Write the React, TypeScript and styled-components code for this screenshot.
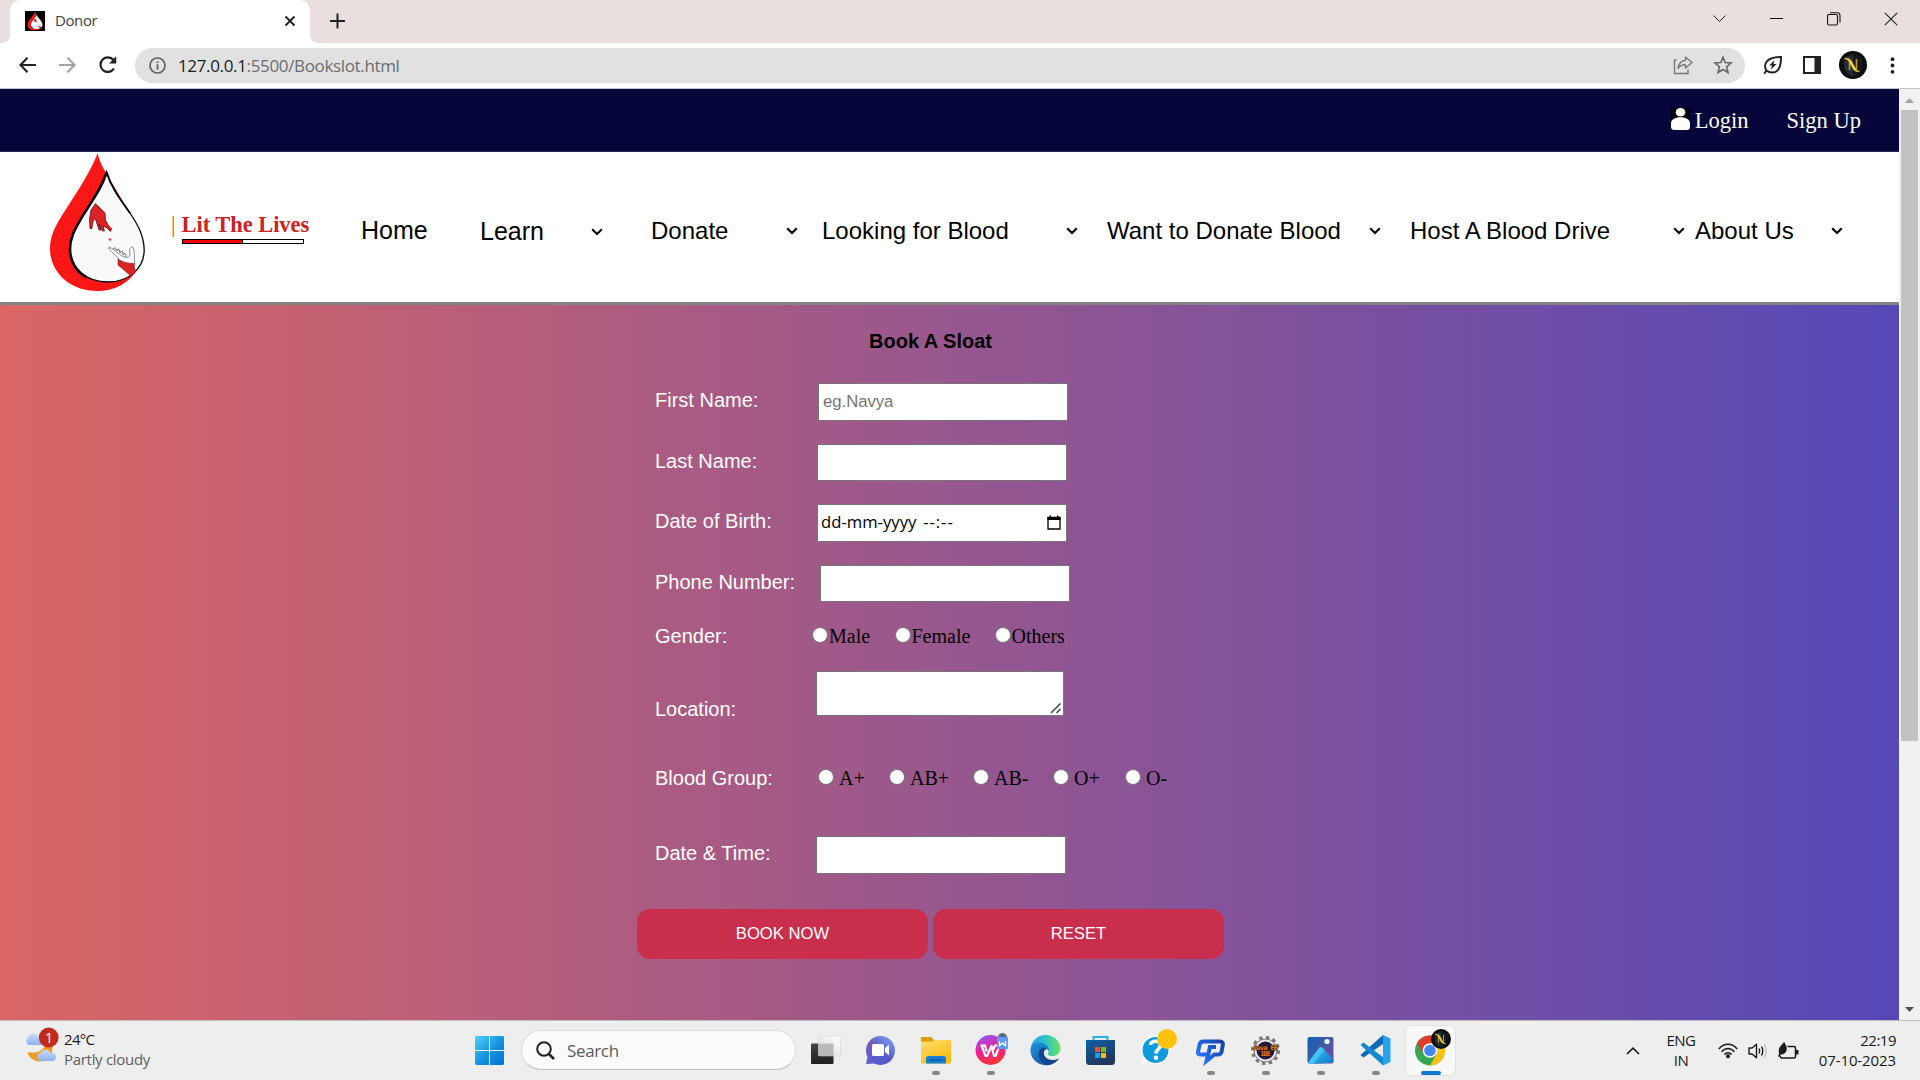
import React from "react";
import styled, { createGlobalStyle } from "styled-components";

const UI = `"Open Sans", "Noto Sans", sans-serif`;
const ARIAL = `"Liberation Sans", Arial, sans-serif`;
const TIMES = `"Liberation Serif", "Times New Roman", serif`;

const Global = createGlobalStyle`
  * { box-sizing: border-box; }
  body { margin: 0; overflow: hidden; background: #fff; }
  svg { display: block; flex: none; }
`;

const Screen = styled.div`
  width: 1920px;
  height: 1080px;
  display: flex;
  flex-direction: column;
  overflow: hidden;
`;

/* ---------- browser frame ---------- */

const TabStrip = styled.div`
  height: 43px;
  flex: none;
  display: flex;
  background: #e8dfde;
  padding-left: 2px;
`;

const TabFoot = styled.div<{ $side: "left" | "right" }>`
  width: 8px;
  height: 43px;
  background: radial-gradient(
    circle at ${(p) => (p.$side === "left" ? "0 35px" : "8px 35px")},
    transparent 7.6px,
    #fff 8.2px
  );
  clip-path: inset(35px 0 0 0);
`;

const Tab = styled.div`
  width: 300px;
  height: 43px;
  border-radius: 10px 10px 0 0;
  background: #fff;
  display: flex;
  align-items: center;
  padding: 0 14px 1px 15px;
`;

const TabTitle = styled.span`
  flex: 1;
  margin: 0 0 2px 10px;
  font: 15px/20px ${UI};
  letter-spacing: -0.4px;
  color: #3c4043;
`;

const NewTab = styled.div`
  padding: 13px 0 0 12px;
`;

const WindowButtons = styled.div`
  margin-left: auto;
  height: 38px;
  display: flex;
  align-items: center;
`;

const WindowButton = styled.div`
  width: 57.3px;
  display: flex;
  justify-content: center;
`;

const Toolbar = styled.div`
  height: 46px;
  flex: none;
  display: flex;
  align-items: center;
  background: #fff;
  border-bottom: 1px solid #c4c4c4;
  padding: 0 16px 1px 17px;
`;

const NavButtons = styled.div`
  display: flex;
  gap: 19px;
  width: 118px;
`;

const AddressBar = styled.div`
  width: 1610px;
  height: 35px;
  border-radius: 18px;
  background: #e1e1e1;
  display: flex;
  align-items: center;
  padding: 0 12px 0 14px;
`;

const Url = styled.div`
  flex: 1;
  margin: 2px 0 0 12px;
  font: 17px/24px ${UI};
  letter-spacing: -0.35px;
  color: #6a6d70;
  b {
    font-weight: 400;
    color: #202124;
  }
`;

const BarIcons = styled.div`
  display: flex;
  gap: 20px;
`;

const Extensions = styled.div`
  flex: 1;
  display: flex;
  align-items: center;
  margin-left: 18px;
`;

const Spacer = styled.div<{ $w: number }>`
  width: ${(p) => p.$w}px;
  flex: none;
`;

/* ---------- site ---------- */

const Viewport = styled.div`
  height: 931px;
  flex: none;
  display: flex;
`;

const Page = styled.div`
  width: 1899px;
  display: flex;
  flex-direction: column;
`;

const AccountBar = styled.div`
  height: 63px;
  flex: none;
  background: #06063b;
  border-bottom: 1px solid #2a2a55;
  display: flex;
  justify-content: flex-end;
  padding: 19px 38px 0 0;
`;

const AccountLink = styled.a`
  font: 22.5px/26px ${TIMES};
  color: #fff;
  margin-left: 5px;
`;

const SiteHeader = styled.header`
  height: 153px;
  flex: none;
  background: #fff;
  border-bottom: 3px solid #828282;
  display: flex;
`;

const LogoBox = styled.div`
  width: 171px;
  padding-left: 48px;
`;

const Brand = styled.div`
  width: 190px;
  padding-top: 60px;
`;

const BrandName = styled.div`
  font: bold 22.5px/26px ${TIMES};
  letter-spacing: -0.05px;
  color: #cb2222;
  white-space: pre;
  span {
    font-weight: 400;
    color: #d9572f;
    margin-right: 6px;
  }
`;

const BrandBar = styled.div`
  display: grid;
  grid-template-columns: 1fr 1fr;
  width: 122px;
  height: 5px;
  margin: 1px 0 0 11px;
  border: 1px solid #000;
  background: #fff;
  &::before {
    content: "";
    background: #f00;
    border-right: 1px solid #000;
  }
`;

const Menu = styled.nav`
  display: grid;
  grid-template-columns: 119px 171px 171px 285px 303px 285px 170px;
  padding-top: 64px;
`;

const MenuItem = styled.div<{ $w: number; $drop?: number; $size?: number }>`
  width: ${(p) => p.$w}px;
  height: 29px;
  margin-top: ${(p) => p.$drop ?? 0}px;
  display: flex;
  justify-content: space-between;
  align-items: center;
  font: ${(p) => p.$size ?? 24}px/29px ${ARIAL};
  color: #000;
  white-space: nowrap;
`;

const FormArea = styled.main`
  flex: 1;
  background: linear-gradient(to right, #da6665, #5548b7);
  padding: 24px 0 0 637px;
`;

const FormTitle = styled.h1`
  margin: 0 0 30px 232px;
  font: bold 20px/24px ${ARIAL};
  color: #000;
`;

const Row = styled.div<{ $gap?: number; $h: number }>`
  margin: ${(p) => p.$gap ?? 0}px 0 0 18px;
  height: ${(p) => p.$h}px;
  display: flex;
  align-items: flex-start;
`;

const Label = styled.label<{ $w: number; $drop?: number }>`
  width: ${(p) => p.$w}px;
  flex: none;
  margin-top: ${(p) => p.$drop ?? 0}px;
  font: 20px/24px ${ARIAL};
  color: #fff;
`;

const Field = styled.input<{ $h?: number }>`
  width: 250px;
  height: ${(p) => p.$h ?? 38}px;
  margin: 0;
  padding: 0 4px;
  border: 1px solid #767676;
  border-radius: 0;
  outline: none;
  background: #fff;
  font: 16.67px/20px ${ARIAL};
  &::placeholder {
    color: #757575;
  }
`;

const DateField = styled.div`
  width: 250px;
  height: 38px;
  padding: 0 5px 2px 3px;
  border: 1px solid #767676;
  background: #fff;
  display: flex;
  align-items: center;
  justify-content: space-between;
  font: 16.67px/20px ${UI};
  color: #000;
  span {
    margin-left: 7px;
    letter-spacing: 0.9px;
  }
`;

const AreaField = styled.div`
  width: 248px;
  height: 45px;
  border: 1px solid #767676;
  background: #fff;
  display: flex;
  align-items: flex-end;
  justify-content: flex-end;
  padding: 1px;
`;

const Choice = styled.label<{ $w: number; $space: number }>`
  width: ${(p) => p.$w}px;
  flex: none;
  display: flex;
  gap: ${(p) => p.$space}px;
  font: 20px/24px ${TIMES};
  color: #000;
  white-space: nowrap;
`;

const Dot = styled.span`
  width: 16px;
  height: 16px;
  margin-top: 3px;
  flex: none;
  border-radius: 50%;
  border: 1px solid #767676;
  background: #fff;
`;

const Actions = styled.div`
  display: flex;
  gap: 5px;
  margin-top: 35px;
`;

const Action = styled.button`
  width: 291px;
  height: 50px;
  border: 0;
  border-radius: 13px;
  background: #ca2e4d;
  color: #fff;
  font: 16.67px/20px ${ARIAL};
  padding: 0;
`;

const Scrollbar = styled.div`
  width: 21px;
  background: #f1f1f1;
  display: flex;
  flex-direction: column;
  align-items: center;
  padding: 9px 0 8px;
`;

const Thumb = styled.div`
  width: 17px;
  height: 631px;
  margin: 7px 0 auto;
  background: #c1c1c1;
`;

/* ---------- taskbar ---------- */

const Taskbar = styled.div`
  height: 60px;
  flex: none;
  display: flex;
  background: #eeeeee;
  border-top: 1px solid #bdbdbd;
`;

const Weather = styled.div`
  width: 461px;
  display: flex;
  padding: 6px 0 0 24px;
`;

const SmallText = styled.div<{ $muted?: boolean; $track?: number }>`
  font: 15px/20px ${UI};
  letter-spacing: ${(p) => p.$track ?? -0.3}px;
  color: ${(p) => (p.$muted ? "#5f5f5f" : "#1a1a1a")};
  white-space: nowrap;
`;

const WeatherText = styled.div`
  margin: 2px 0 0 4px;
`;

const StartCell = styled.div`
  width: 60px;
  padding: 15px 0 0 14px;
`;

const SearchBox = styled.div`
  width: 275px;
  height: 40px;
  margin: 9px 2px 0 0;
  border: 1px solid #dcdcdc;
  border-bottom-color: #c0c0c0;
  border-radius: 20px;
  background: #fbfbfb;
  display: flex;
  align-items: center;
  padding-left: 14px;
  gap: 12px;
  font: 17px/24px ${UI};
  letter-spacing: -0.35px;
  color: #5c5c5c;
  span {
    margin-top: 1px;
  }
`;

const AppCell = styled.div<{ $active?: boolean }>`
  width: 49px;
  height: 49px;
  margin: 5px 3px 0;
  flex: none;
  display: flex;
  flex-direction: column;
  align-items: center;
  justify-content: space-between;
  border-radius: 5px;
  background: ${(p) => (p.$active ? "#f8f8f8" : "transparent")};
  box-shadow: ${(p) => (p.$active ? "0 0 0 1px #e2e2e2" : "none")};
  padding-top: 2px;
`;

const Mark = styled.div<{ $kind: "none" | "open" | "active" }>`
  width: ${(p) => (p.$kind === "active" ? 20 : 8)}px;
  height: 4px;
  border-radius: 2px;
  background: ${(p) =>
    p.$kind === "active" ? "#0a78d4" : p.$kind === "open" ? "#868686" : "transparent"};
`;

const Tray = styled.div`
  margin-left: auto;
  display: flex;
  align-items: center;
  padding-right: 24px;
`;

const TrayText = styled.div<{ $align: string; $w: number }>`
  width: ${(p) => p.$w}px;
  text-align: ${(p) => p.$align};
  margin-bottom: 2px;
`;

/* ---------- drawings ---------- */

const Drop = ({ w, h, dark }: { w: number; h: number; dark?: boolean }) => (
  <svg width={w} height={h} viewBox={dark ? "-14 -4 126 148" : "0 0 97 140"} preserveAspectRatio="none">
    {dark && <rect x="-14" y="-4" width="126" height="148" fill="#000" />}
    <path d="M49.500 1C51 8 54 14 58 21L90 75C96 87 98 102 91 115C81 132 66 139 49 139C22 139 2 120 2 97C2 84 7 75 13 65L34 32C41 20 47 9 49.500 1Z" fill="#fc1717" />
    <path d="M58.500 20C63 35 72 47 82 61C90 73 96 84 96.200 98C96 117 80 130 60 130C39 130 22 117 22 97C22 85 27 77 34 65C44 49 55 34 58.500 20Z" fill="#fafafa" stroke="#050505" strokeWidth="1.300" />
    <path d="M58.500 20C55 34 44 49 34 65C27 77 22 85 22 97C22 110 29 120 38 125" fill="none" stroke="#050505" strokeWidth="2.600" />
    <path d="M58.500 20C63 35 72 47 82 61" fill="none" stroke="#050505" strokeWidth="1.800" />
    <path d="M43 58L47.500 51.500L57 61L57.500 68L60 73L63.500 77L62.500 79.500L59 76L55 74L56.500 79L54.500 79L51 72L53 78L51 78L47.500 67C44.500 68 45 71 44 76.500L42 76.500L41.500 67Z" fill="#dd2225" stroke="#3b0b0b" strokeWidth=".7" />
    <path d="M57 70L63 77.500" stroke="#dd2225" strokeWidth="2" />
    <circle cx="62" cy="87.500" r="1.300" fill="#e33" />
    <path d="M61 95C66 97 69 101 74 104C78 106 82 106 82 102C81 97 82 95 84.500 95C87 98 86 107 87 112L86 118L72 112L70 106L61 97Z" fill="#fff" stroke="#444" strokeWidth=".6" />
    <path d="M65 98Q67 93 69 99Q71 94 72 101Q75 96 75 103Q78 99 78 105" fill="none" stroke="#333" strokeWidth=".7" />
    <path d="M70 107C76 111 80 111 86 111.500L86 116L88 119L83 124L70 113Z" fill="#dd2225" stroke="#5b1010" strokeWidth=".5" />
  </svg>
);

const Chevron = () => (
  <svg width="12" height="8" viewBox="0 0 12 8">
    <path d="M1.200 1.200L6 6L10.800 1.200" fill="none" stroke="#000" strokeWidth="2.100" />
  </svg>
);

const Avatar = ({ size }: { size: number }) => (
  <svg width={size} height={size} viewBox="0 0 28 28">
    <circle cx="14" cy="14" r="14" fill="#0b0d10" />
    <path d="M14 3L23 6.500V14C23 20 19 23.500 14 26C9 23.500 5 20 5 14V6.500Z" fill="#252c33" />
    <path d="M14 3L23 6.500V14C23 20 19 23.500 14 26Z" fill="#14191f" />
    <path d="M10.500 11V19M17.500 8V18.500" stroke="#b8992f" strokeWidth="1.600" />
    <path d="M5.500 7.500C9.500 7 11.500 8 13 11L17 18.500Q18 20 20.500 20.200C17.500 21 15.500 20.200 14 17.500L10 10.500C9 8.800 7.500 8 5.500 7.500Z" fill="#f3d13c" stroke="#f3d13c" strokeWidth=".6" />
  </svg>
);

const StoreSquares = () => (
  <>
    <path d="M9 15h5v5H9z" fill="#f25022" />
    <path d="M15 15h5v5h-5z" fill="#7fba00" />
    <path d="M9 21h5v5H9z" fill="#00a4ef" />
    <path d="M15 21h5v5h-5z" fill="#ffb900" />
  </>
);

/* Every taskbar drawing shares one canvas whose origin is the icon's middle. */
const AppIcon = ({ children }: { children: React.ReactNode }) => (
  <svg width="49" height="40" viewBox="-24.500 -22.500 49 40">
    {children}
  </svg>
);

const apps: { name: string; mark: "none" | "open" | "active"; art: React.ReactNode }[] = [
  {
    name: "Task view",
    mark: "none",
    art: (
      <>
        <defs>
          <linearGradient id="tvd" x2="0" y2="1"><stop stopColor="#454545" /><stop offset="1" stopColor="#1e1e1e" /></linearGradient>
          <linearGradient id="tvl" x1="1" x2="0" y2="1"><stop stopColor="#fff" /><stop offset="1" stopColor="#d9d9d9" /></linearGradient>
        </defs>
        <rect x="-14.500" y="-7" width="22.500" height="20.500" rx="1" fill="url(#tvd)" />
        <rect x="-7" y="-14.500" width="22" height="20" rx="1" fill="url(#tvl)" stroke="#d0d0d0" strokeWidth=".5" />
        <rect x="-7" y="-7" width="15" height="12.500" fill="#b9b9b9" />
      </>
    ),
  },
  {
    name: "Chat",
    mark: "none",
    art: (
      <>
        <defs><linearGradient id="chat" x1="0" x2="1" y2=".8"><stop stopColor="#8e5aa2" /><stop offset=".45" stopColor="#5b5fd0" /><stop offset="1" stopColor="#5252c2" /></linearGradient>
        <linearGradient id="chat2" x1="0" x2="1" y1="1" y2="0"><stop offset=".5" stopColor="#79b6ff" stopOpacity="0" /><stop offset="1" stopColor="#7fa8f8" /></linearGradient></defs>
        <path d="M0-14.500A14.500 14.500 0 1 1-6.500 13L-14.500 13.500L-13 6.500A14.500 14.500 0 0 1 0-14.500Z" fill="url(#chat)" />
        <circle r="14.500" fill="url(#chat2)" />
        <rect x="-8.500" y="-6.500" width="12" height="12" rx="1.500" fill="#fff" />
        <path d="M4.500-2.500L8.500-6V5L4.500 1.500Z" fill="#fff" />
      </>
    ),
  },
  {
    name: "File Explorer",
    mark: "open",
    art: (
      <>
        <defs><linearGradient id="fld" x2=".6" y2="1"><stop stopColor="#ffdd6e" /><stop offset="1" stopColor="#f9bb16" /></linearGradient></defs>
        <path d="M-14.500-13.500H-4.500L-1.500-10.500V-5H-14.500Z" fill="#dd9c05" />
        <path d="M-14.500-9H-4L-1-10.500H15.500V13H-14.500Z" fill="url(#fld)" />
        <path d="M-9.500 13V8Q-9.500 5.500-7 5.500H8Q10.500 5.500 10.500 8V13Z" fill="#1480d8" />
        <path d="M-6 9.500H7" stroke="#0b4f97" strokeWidth="1.200" />
      </>
    ),
  },
  {
    name: "WPS Office",
    mark: "open",
    art: (
      <>
        <defs><linearGradient id="wps" x1=".3" x2=".6" y2="1"><stop stopColor="#9456f5" /><stop offset=".5" stopColor="#f51c8f" /><stop offset="1" stopColor="#ff3b30" /></linearGradient></defs>
        <circle cy="-.5" r="15" fill="url(#wps)" />
        <path d="M-5.500-5H-9L-5 5.500H-3.500L1-4.500L3.500 5.500H5L9-5H4.500L3-1.500M-5.500-5L-4 0" fill="none" stroke="#fff" strokeWidth="2.200" strokeLinejoin="round" strokeLinecap="round" />
        <circle cx="12" cy="-13" r="4.500" fill="#596a83" />
        <rect x="6.500" y="-13.500" width="11" height="12" rx="1" fill="#5f97f1" />
        <path d="M9-9.500V-5L12-7.500L15-5V-9.500" fill="none" stroke="#fff" strokeWidth="1.300" />
      </>
    ),
  },
  {
    name: "Edge",
    mark: "none",
    art: (
      <>
        <defs>
          <linearGradient id="eg1" x2="1"><stop stopColor="#2a9ce0" /><stop offset=".5" stopColor="#2fc3c9" /><stop offset="1" stopColor="#6ee35c" /></linearGradient>
          <linearGradient id="eg2" x2=".6" y2="1"><stop stopColor="#1d93dc" /><stop offset="1" stopColor="#1259a8" /></linearGradient>
        </defs>
        <path d="M-15-1C-14-10-8-15.500 0-15.500C9-15.500 15-9 15-2C15 3 11 5.500 7 5.500C3 5.500 1 4 3 2C4-3-1-8-7-7C-11-6-14-4-15-1Z" fill="url(#eg1)" />
        <path d="M-15-1C-14-8-6-9-2-7C2-5 4-2.500 3.500 1C3-1.500 0-2.500-1.500 1C-3 8 5 13 13 8C8 14 3 15 0 14.800C-9 14.500-15.500 7-15-1Z" fill="url(#eg2)" />
        <path d="M-4-3C-10 3-6 13 2 14.600C7 14.500 11 11.500 13.500 8.300C6 11.500-3 8-1.500 1Q-1-1 .5-1.500Q-1.500-3.500-4-3Z" fill="#15468d" />
      </>
    ),
  },
  {
    name: "Store",
    mark: "none",
    art: (
      <>
        <defs><linearGradient id="str" x2=".5" y2="1"><stop stopColor="#0a62a9" /><stop offset="1" stopColor="#22355c" /></linearGradient></defs>
        <path d="M-7-10V-13.500H7V-10" fill="none" stroke="#27b1ee" strokeWidth="2" />
        <path d="M-14.500-10.500H14.500V11Q14.500 14.500 11 14.500H-11Q-14.500 14.500-14.500 11Z" fill="url(#str)" />
        <g transform="translate(-14.500 -18.500)"><StoreSquares /></g>
      </>
    ),
  },
  {
    name: "Help",
    mark: "none",
    art: (
      <>
        <path d="M-14.500 13L-12.500 7A14.300 14.300 0 1 1-8 11.500Z" fill="#fff" />
        <circle cx="0" cy="-.5" r="14.500" fill="#fff" />
        <circle cx="0" cy="-.5" r="13" fill="#0c9bdb" />
        <path d="M-5-5.500C-5-10.500 5-10.500 5-5.500C5-1.500 .5-1.500 .5 3" fill="none" stroke="#fff" strokeWidth="3.600" />
        <circle cx=".5" cy="7.300" r="2.300" fill="#fff" />
        <circle cx="11.500" cy="-11.500" r="10" fill="#fec10d" />
      </>
    ),
  },
  {
    name: "Q client",
    mark: "open",
    art: (
      <>
        <defs><linearGradient id="qc" x1="1" x2="0" y2=".6"><stop stopColor="#1644a8" /><stop offset="1" stopColor="#2671f2" /></linearGradient></defs>
        <path d="M-3 4H-9.500Q-13 4-12.500 1.500L-11-5.500Q-10.500-9-7-9H9.500Q13-9 12.300-5.500L11 1.500Q10.500 4 7.500 4H4L-4 10.500L-.5-3.500H5.500" fill="none" stroke="url(#qc)" strokeWidth="4" />
      </>
    ),
  },
  {
    name: "Java EE IDE",
    mark: "open",
    art: (
      <>
        <circle r="12.800" fill="none" stroke="#777" strokeWidth="3.500" strokeDasharray="3.350 3.350" />
        <circle r="11.500" fill="#e6e6e6" stroke="#777" strokeWidth="1" />
        <circle r="9" fill="#241b3c" />
        <text textAnchor="middle" y="-1" fontFamily="DejaVu Sans Mono, monospace" fontWeight="700" fontSize="6.500" textLength="25" fill="#f58220" stroke="#3a1a08" strokeWidth=".8" paintOrder="stroke">Java EE</text>
        <text textAnchor="middle" y="5.500" fontFamily="DejaVu Sans Mono, monospace" fontWeight="700" fontSize="6.500" textLength="10" fill="#f58220" stroke="#3a1a08" strokeWidth=".8" paintOrder="stroke">IDE</text>
      </>
    ),
  },
  {
    name: "Photos",
    mark: "open",
    art: (
      <>
        <defs>
          <linearGradient id="ph" x2="1" y2=".6"><stop stopColor="#0c63b3" /><stop offset="1" stopColor="#6a4fa0" /></linearGradient>
          <linearGradient id="ph2" x2="1" y2="1"><stop stopColor="#41c6f4" /><stop offset="1" stopColor="#1279cf" /></linearGradient>
        </defs>
        <rect x="-13" y="-13.500" width="26" height="26.500" rx="2" fill="url(#ph)" />
        <path d="M-12 11.500L-1.500-2.500Q0-4.500 2-2.500L13 9V11Q13 13-11 13Z" fill="url(#ph2)" />
        <path d="M-12 11.500L-1.500-2.500Q0-4.500 2-2.500L4-.5L-7 13H-11Z" fill="#40c4f3" />
        <circle cx="6.500" cy="-9" r="2.600" fill="#eef6ff" />
      </>
    ),
  },
  {
    name: "VS Code",
    mark: "open",
    art: (
      <>
        <path d="M-12 7L-15 4.500L7.500-15.500V-6.500Z" fill="#0f6cb3" />
        <path d="M-12-8L-15-5.500L7.500 15V6.500Z" fill="#1687d3" />
        <path d="M7.500-15.500L15-12V11.500L7.500 15Z" fill="#27a3ee" />
      </>
    ),
  },
  {
    name: "Chrome",
    mark: "active",
    art: (
      <>
        <circle cx="-.5" r="15" fill="#34a853" />
        <path d="M-.5 0L-13.500-7.500A15 15 0 0 1 12.500-7.500Z" fill="#e33b2e" />
        <path d="M-.5-7.500H12.500A15 15 0 0 1-.5 15L6 3.700Z" fill="#fbc116" />
        <path d="M-13.500-7.500L-7 3.800L-.5-7.500Z" fill="#e33b2e" />
        <circle cx="-.5" r="7.300" fill="#fff" />
        <circle cx="-.5" r="5.800" fill="#4285f4" />
        <g transform="translate(.5 -21.500)"><Avatar size={20} /></g>
      </>
    ),
  },
];

const Option = ({ w, space, text }: { w: number; space: number; text: string }) => (
  <Choice $w={w} $space={space}>
    <Dot />
    {text}
  </Choice>
);

const menu = [
  { text: "Learn", w: 123, drop: 1, size: 25 },
  { text: "Donate", w: 147 },
  { text: "Looking for Blood", w: 256 },
  { text: "Want to Donate Blood", w: 274 },
  { text: "Host A Blood Drive", w: 275 },
  { text: "About Us", w: 148 },
];

export default function App() {
  return (
    <Screen>
      <Global />
      <TabStrip>
        <TabFoot $side="left" />
        <Tab>
          <Drop w={20} h={20} dark />
          <TabTitle>Donor</TabTitle>
          <svg width="12" height="12" viewBox="0 0 12 12"><path d="M1.500 1.500L10.500 10.500M10.500 1.500L1.500 10.500" stroke="#202124" strokeWidth="1.900" /></svg>
        </Tab>
        <TabFoot $side="right" />
        <NewTab>
          <svg width="15" height="16" viewBox="0 0 15 16"><path d="M0 8H15M7.500 .5V15.500" stroke="#202124" strokeWidth="2" /></svg>
        </NewTab>
        <WindowButtons>
          <WindowButton><svg width="13" height="8" viewBox="0 0 13 8"><path d="M.5 .5L6.500 6.500L12.500 .5" fill="none" stroke="#222" strokeWidth="1" /></svg></WindowButton>
          <WindowButton><svg width="13" height="2" viewBox="0 0 13 2"><path d="M0 .5H13" stroke="#111" /></svg></WindowButton>
          <WindowButton><svg width="14" height="14" viewBox="0 0 14 14"><rect x=".5" y="2.500" width="10" height="10.500" rx="1.500" fill="none" stroke="#111" strokeWidth="1.100" /><path d="M3 .7H10Q13 .7 13 3.500V10.500" fill="none" stroke="#111" strokeWidth="1.100" /></svg></WindowButton>
          <WindowButton><svg width="14" height="14" viewBox="0 0 14 14"><path d="M.8 .8L13.200 13.200M13.200 .8L.8 13.200" stroke="#222" strokeWidth="1.100" /></svg></WindowButton>
        </WindowButtons>
      </TabStrip>
      <Toolbar>
        <NavButtons>
          <svg width="21" height="20" viewBox="0 0 21 20"><path d="M19 10H4M10.500 2.800L3.500 10L10.500 17.200" fill="none" stroke="#202124" strokeWidth="2.100" /></svg>
          <svg width="21" height="20" viewBox="0 0 21 20"><path d="M2 10H17M10.500 2.800L17.500 10L10.500 17.200" fill="none" stroke="#a3a3a3" strokeWidth="2.100" /></svg>
          <svg width="21" height="20" viewBox="0 0 21 20"><path d="M17 13.500A7.300 7.300 0 1 1 16.500 5" fill="none" stroke="#202124" strokeWidth="2.200" /><path d="M19.200 1.200V8.500H12Z" fill="#202124" /></svg>
        </NavButtons>
        <AddressBar>
          <svg width="17" height="17" viewBox="0 0 17 17"><circle cx="8.500" cy="8.500" r="7.500" fill="none" stroke="#5f6368" strokeWidth="1.700" /><path d="M8.500 7.300V12.800M8.500 4.200V6" stroke="#5f6368" strokeWidth="1.800" /></svg>
          <Url><b>127.0.0.1</b>:5500/Bookslot.html</Url>
          <BarIcons>
            <svg width="20" height="20" viewBox="0 0 20 20"><path d="M3.500 5H1.500V18.500H15V14.500" fill="none" stroke="#777" strokeWidth="1.400" /><path d="M12.500 2L19 7.500L12.500 13V9.800C9 9.800 6.500 11 5 13.500C5.500 9 8 5.800 12.500 5.200Z" fill="none" stroke="#777" strokeWidth="1.400" strokeLinejoin="round" /></svg>
            <svg width="20" height="20" viewBox="0 0 20 20"><path d="M10 2.200L12.200 7.500L18 8L13.600 11.800L15 17.500L10 14.500L5 17.500L6.400 11.800L2 8L7.800 7.500Z" fill="none" stroke="#666" strokeWidth="1.600" /></svg>
          </BarIcons>
        </AddressBar>
        <Extensions>
          <svg width="20" height="20" viewBox="0 0 20 20"><path d="M3.500 16C.5 11 1.500 1.800 18 2C18.300 12 15 17.500 9.500 17.500C7 17.500 5 16.800 3.500 15.500L1.200 18.800" fill="none" stroke="#202124" strokeWidth="1.900" /><path d="M11.500 5L6.200 10.500H9L7.800 14.800L13.500 9H10.500Z" fill="#202124" /></svg>
          <Spacer $w={20} />
          <svg width="18" height="18" viewBox="0 0 18 18"><path d="M1 1H17V17H1Z" fill="#fff" stroke="#202124" strokeWidth="2" /><path d="M11.500 0H18V18H11.500Z" fill="#202124" /></svg>
          <Spacer $w={18} />
          <Avatar size={28} />
          <Spacer $w={23} />
          <svg width="5" height="17" viewBox="0 0 5 17"><circle cx="2.500" cy="2.200" r="1.900" fill="#202124" /><circle cx="2.500" cy="8.500" r="1.900" fill="#202124" /><circle cx="2.500" cy="14.800" r="1.900" fill="#202124" /></svg>
        </Extensions>
      </Toolbar>

      <Viewport>
        <Page>
          <AccountBar>
            <svg width="19" height="22" viewBox="0 0 19 22"><rect width="19" height="22" fill="#000" /><ellipse cx="9.500" cy="4.300" rx="4.800" ry="4.300" fill="#fff" /><path d="M0 19V15C0 11 5 9.200 9.500 9.200S19 11 19 15V19Q19 22 15.500 22H3.500Q0 22 0 19Z" fill="#fff" /></svg>
            <AccountLink>Login</AccountLink>
            <Spacer $w={33} />
            <AccountLink>Sign Up</AccountLink>
          </AccountBar>
          <SiteHeader>
            <LogoBox><Drop w={97} h={140} /></LogoBox>
            <Brand>
              <BrandName><span>|</span>Lit The Lives</BrandName>
              <BrandBar />
            </Brand>
            <Menu>
              <MenuItem $w={70} $size={25}>Home</MenuItem>
              {menu.map((m) => (
                <MenuItem key={m.text} $w={m.w} $drop={m.drop} $size={m.size}>
                  {m.text}
                  <Chevron />
                </MenuItem>
              ))}
            </Menu>
          </SiteHeader>
          <FormArea>
            <FormTitle>Book A Sloat</FormTitle>
            <Row $h={38}>
              <Label $w={163} $drop={5}>First Name:</Label>
              <Field placeholder="eg.Navya" />
            </Row>
            <Row $h={37} $gap={23}>
              <Label $w={162} $drop={5}>Last Name:</Label>
              <Field $h={37} />
            </Row>
            <Row $h={38} $gap={23}>
              <Label $w={162} $drop={5}>Date of Birth:</Label>
              <DateField>
                <div>dd-mm-yyyy<span>--:--</span></div>
                <svg width="14" height="15" viewBox="0 0 14 15"><path d="M1 2.500H13V14H1Z" fill="none" stroke="#000" strokeWidth="1.300" /><path d="M.5 2H13.500V5H.5ZM2.500 .5H4V2H2.500ZM10 .5H11.500V2H10Z" fill="#000" /></svg>
              </DateField>
            </Row>
            <Row $h={37} $gap={23}>
              <Label $w={165} $drop={5}>Phone Number:</Label>
              <Field $h={37} />
            </Row>
            <Row $h={24} $gap={22}>
              <Label $w={157}>Gender:</Label>
              <Option w={82.5} space={1} text="Male" />
              <Option w={100} space={1} text="Female" />
              <Option w={80} space={1} text="Others" />
            </Row>
            <Row $h={45} $gap={23}>
              <Label $w={161} $drop={26}>Location:</Label>
              <AreaField>
                <svg width="12" height="12" viewBox="0 0 12 12"><path d="M1 11L10.500 1.500M6.500 11L10.500 7" stroke="#444" strokeWidth="1.500" /></svg>
              </AreaField>
            </Row>
            <Row $h={24} $gap={50}>
              <Label $w={163}>Blood Group:</Label>
              <Option w={71} space={5} text="A+" />
              <Option w={84} space={5} text="AB+" />
              <Option w={79.5} space={5} text="AB-" />
              <Option w={72} space={5.5} text="O+" />
              <Option w={60} space={5.5} text="O-" />
            </Row>
            <Row $h={38} $gap={46}>
              <Label $w={161} $drop={5}>Date &amp; Time:</Label>
              <Field />
            </Row>
            <Actions>
              <Action>BOOK NOW</Action>
              <Action>RESET</Action>
            </Actions>
          </FormArea>
        </Page>
        <Scrollbar>
          <svg width="9" height="5" viewBox="0 0 9 5"><path d="M0 5L4.500 0L9 5Z" fill="#a3a3a3" /></svg>
          <Thumb />
          <svg width="9" height="5" viewBox="0 0 9 5"><path d="M0 0H9L4.500 5Z" fill="#505050" /></svg>
        </Scrollbar>
      </Viewport>

      <Taskbar>
        <Weather>
          <svg width="36" height="36" viewBox="0 0 36 36">
            <defs><linearGradient id="cl" x2="0" y2="1"><stop stopColor="#c9dcfa" /><stop offset="1" stopColor="#8fb3ee" /></linearGradient></defs>
            <path d="M5 18A4.300 4.300 0 0 1 4 10.500A6 6 0 0 1 14.500 9L18 18Z" fill="url(#cl)" />
            <path d="M3.500 25C12 27 19 24 20.500 19L28 18.500C30.500 30 19 38 10 33C6 31 4 28 3.500 25Z" fill="#f39a1f" />
            <path d="M16 34A4.600 4.600 0 0 1 16.500 25.500A6 6 0 0 1 27 26A4 4 0 0 1 29 34Z" fill="url(#cl)" />
            <circle cx="24.700" cy="10.500" r="9.900" fill="#c42b1c" />
            <text x="25" y="15.500" textAnchor="middle" fontFamily="Open Sans" fontSize="14" fill="#fff">1</text>
          </svg>
          <WeatherText>
            <SmallText $track={-0.7}>24°C</SmallText>
            <SmallText $muted>Partly cloudy</SmallText>
          </WeatherText>
        </Weather>
        <StartCell>
          <svg width="29" height="29" viewBox="0 0 29 29">
            <defs><linearGradient id="win" x2="1" y2="1"><stop stopColor="#4fd0fb" /><stop offset=".55" stopColor="#1490df" /><stop offset="1" stopColor="#0473d2" /></linearGradient></defs>
            <path d="M1 0H14V14H0V1ZM15 0H28L29 1V14H15ZM0 15H14V29H1L0 28ZM15 15H29V28L28 29H15Z" fill="url(#win)" />
          </svg>
        </StartCell>
        <SearchBox>
          <svg width="19" height="19" viewBox="0 0 19 19"><circle cx="8" cy="8" r="6.800" fill="none" stroke="#222" strokeWidth="2" /><path d="M12.800 12.800L18 18" stroke="#222" strokeWidth="2.600" /></svg>
          <span>Search</span>
        </SearchBox>
        {apps.map((a) => (
          <AppCell key={a.name} $active={a.mark === "active"}>
            <AppIcon>{a.art}</AppIcon>
            <Mark $kind={a.mark} />
          </AppCell>
        ))}
        <Tray>
          <svg width="14" height="8" viewBox="0 0 14 8"><path d="M1 7L7 1.200L13 7" fill="none" stroke="#1a1a1a" strokeWidth="1.600" /></svg>
          <Spacer $w={20} />
          <TrayText $w={42} $align="center">
            <SmallText $track={-0.5}>ENG</SmallText>
            <SmallText $track={-0.5}>IN</SmallText>
          </TrayText>
          <Spacer $w={16} />
          <svg width="20" height="16" viewBox="0 0 20 16"><path d="M.8 6C6-.2 14-.2 19.200 6M3.600 8.800C7.500 4.300 12.500 4.300 16.400 8.800M6.400 11.500C8.500 9 11.500 9 13.600 11.500" fill="none" stroke="#1a1a1a" strokeWidth="1.500" /><circle cx="10" cy="13.300" r="2" fill="#1a1a1a" /></svg>
          <Spacer $w={10} />
          <svg width="20" height="16" viewBox="0 0 20 16"><path d="M1 5H4L8.500 1.200V14.800L4 11H1Z" fill="none" stroke="#1a1a1a" strokeWidth="1.400" strokeLinejoin="round" /><path d="M11 5.500Q12.500 8 11 10.500M13.500 3.500Q16 8 13.500 12.500" fill="none" stroke="#1a1a1a" strokeWidth="1.400" /><path d="M16.200 1.500Q20.500 8 16.200 14.500" fill="none" stroke="#c2c2c2" strokeWidth="1.400" /></svg>
          <Spacer $w={10} />
          <svg width="21" height="18" viewBox="0 0 21 18"><path d="M9.500 4.500H16Q17.500 4.500 17.500 6V14.500Q17.500 16 16 16H4Q2.500 16 2 14" fill="none" stroke="#1a1a1a" strokeWidth="1.500" /><path d="M18 8H20.500V12.500H18Z" fill="#1a1a1a" /><path d="M6 0C7.500 2 9.500 5 8.500 8.500C7.800 11 5.500 12.500 3 12.500L.8 15L0 14L1.200 11.500C-.5 6 3 4 6 0Z" fill="#1a1a1a" /></svg>
          <TrayText $w={97} $align="right">
            <SmallText $track={-0.5}>22:19</SmallText>
            <SmallText $track={-0.1}>07-10-2023</SmallText>
          </TrayText>
        </Tray>
      </Taskbar>
    </Screen>
  );
}
